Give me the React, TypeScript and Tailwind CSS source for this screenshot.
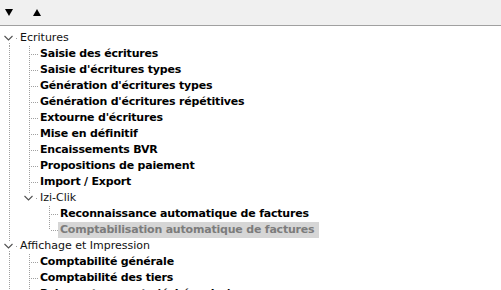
import React from "react";

type Node = {
  label: string;
  children?: Node[];
  selected?: boolean;
};

const tree: Node[] = [
  {
    label: "Ecritures",
    children: [
      { label: "Saisie des écritures" },
      { label: "Saisie d'écritures types" },
      { label: "Génération d'écritures types" },
      { label: "Génération d'écritures répétitives" },
      { label: "Extourne d'écritures" },
      { label: "Mise en définitif" },
      { label: "Encaissements BVR" },
      { label: "Propositions de paiement" },
      { label: "Import / Export" },
      {
        label: "Izi-Clik",
        children: [
          { label: "Reconnaissance automatique de factures" },
          { label: "Comptabilisation automatique de factures", selected: true },
        ],
      },
    ],
  },
  {
    label: "Affichage et Impression",
    children: [
      { label: "Comptabilité générale" },
      { label: "Comptabilité des tiers" },
      { label: "Paiements ouverts (échéancier)" },
    ],
  },
  { label: "Clôtures" },
];

const dot = "#a0a0a0";

// vertical guide for an ancestor that still has siblings below
function Guide({ on }: { on: boolean }) {
  return (
    <svg width="20" height="16" className="shrink-0">
      {on && <line x1="9.5" y1="0" x2="9.5" y2="16" stroke={dot} strokeDasharray="1 1" />}
    </svg>
  );
}

function Connector({ last, first, expandable }: { last: boolean; first: boolean; expandable: boolean }) {
  if (expandable) {
    return (
      <svg width="20" height="16" className="shrink-0">
        {!first && <line x1="9.5" y1="0" x2="9.5" y2="4" stroke={dot} strokeDasharray="1 1" />}
        {!last && <line x1="9.5" y1="13" x2="9.5" y2="16" stroke={dot} strokeDasharray="1 1" />}
        <polyline points="4.5,6 8.5,10 12.5,6" fill="none" stroke="#505050" strokeWidth="1.1" />
        <line x1="16" y1="8.5" x2="18" y2="8.5" stroke={dot} strokeDasharray="1 1" />
      </svg>
    );
  }
  return (
    <svg width="20" height="16" className="shrink-0">
      <line x1="9.5" y1="0" x2="9.5" y2={last ? 8 : 16} stroke={dot} strokeDasharray="1 1" />
      <line x1="11" y1="8.5" x2="19" y2="8.5" stroke={dot} strokeDasharray="1 1" />
    </svg>
  );
}

function Rows({ nodes, guides, depth }: { nodes: Node[]; guides: boolean[]; depth: number }) {
  return (
    <>
      {nodes.map((n, i) => {
        const last = i === nodes.length - 1;
        const expandable = !!n.children;
        return (
          <React.Fragment key={n.label}>
            <div className="flex h-4 items-center whitespace-nowrap">
              {guides.map((g, j) => (
                <Guide key={j} on={g} />
              ))}
              <Connector last={last} first={depth === 0 && i === 0} expandable={expandable} />
              <span
                className={
                  expandable
                    ? "text-[11px] leading-4 text-[#111]"
                    : n.selected
                    ? "ml-[-2px] bg-[#d6d6d6] pl-[2px] pr-[5px] text-[11px] font-bold leading-4 tracking-[-0.2px] text-[#7c7c7c]"
                    : "text-[11px] font-bold leading-4 tracking-[-0.2px] text-black"
                }
              >
                {n.label}
              </span>
            </div>
            {n.children && <Rows nodes={n.children} guides={[...guides, !last]} depth={depth + 1} />}
          </React.Fragment>
        );
      })}
    </>
  );
}

export default function App() {
  return (
    <div
      className="flex h-[290px] w-[501px] flex-col overflow-hidden bg-white"
      style={{ fontFamily: "Tahoma, 'DejaVu Sans', sans-serif" }}
    >
      {/* toolbar */}
      <div className="flex h-[26px] shrink-0 items-center gap-[20px] border-b border-[#a0a0a0] bg-[#f0f0f0] pl-[5px]">
        <svg width="8" height="7" viewBox="0 0 8 7">
          <polygon points="0,0 8,0 4,7" fill="#000" />
        </svg>
        <svg width="8" height="7" viewBox="0 0 8 7">
          <polygon points="0,7 8,7 4,0" fill="#000" />
        </svg>
      </div>

      {/* tree */}
      <div className="flex flex-col pt-[4px]">
        <Rows nodes={tree} guides={[]} depth={0} />
      </div>
    </div>
  );
}
